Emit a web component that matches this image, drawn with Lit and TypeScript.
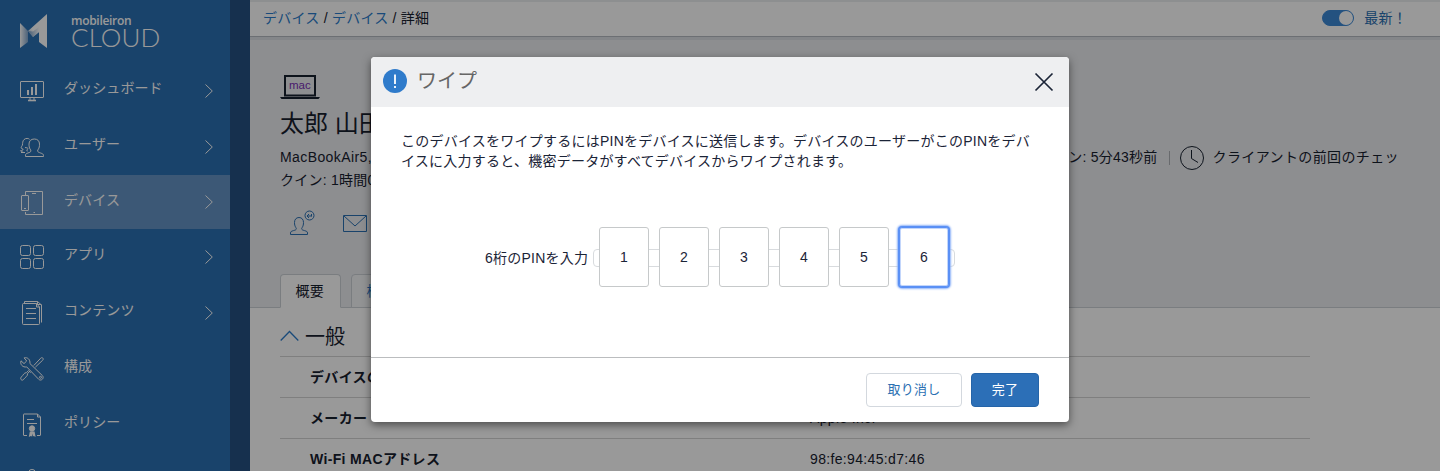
import { LitElement, html, css, svg } from "lit";
import { customElement, state } from "lit/decorators.js";
import { classMap } from "lit/directives/class-map.js";

const navIcons: Record<string, unknown> = {
  dashboard: svg`<rect x=".5" y="2.5" width="23" height="16" rx=".5"/><path d="M10 19v2M14 19v2" /><path d="M8 21.5h8" stroke-width="1.6"/><path d="M8 16v-5M12 16V8M16 16V5" stroke-width="2"/>`,
  users: svg`<path d="M5.5 21.5v-1.4c0-1.2 1-1.6 2.4-2.1 1.7-.6 2.8-.9 3-2 .1-.7-.3-1.2-.8-1.9-.8-1.2-1.1-2.8-1.1-5C9 6 11 4 14.3 4s5.2 2 5.2 5.1c0 2.200-.3 3.800-1.100 5-.5.7-.9 1.200-.8 1.900.2 1.100 1.300 1.400 3 2 1.800.6 2.900 1.100 2.900 2.600v.9z"/><path d="M9.500 4.300C8.600 3.200 5.800 2.900 4 4.600 2.500 6 2.700 8.300 2.400 10c-.2 1-1.400 1.700-1.200 2.900.2.900 1.200 1.200 2 1.300-.2.900-.9 1.400-2.700 1.500.5 1 1.500 1.300 2.700 1.300M5 12.500c.8.500 1.500 0 2.300.3.900.4.600 1.700-.5 2.100l.5 1.500M1 17.500h4"/>`,
  devices: svg`<path d="M5.500 4V.500h17v23h-17V21"/><rect x="1.500" y="4.500" width="7" height="15" rx=".5"/><path d="M12 2.500h4M13.500 21.500h1.500M4 17.500h2"/>`,
  apps: svg`<rect x=".5" y=".5" width="10" height="10" rx="2"/><rect x="13.500" y=".5" width="10" height="10" rx="2"/><rect x=".5" y="13.500" width="10" height="10" rx="2"/><rect x="13.500" y="13.500" width="10" height="10" rx="2"/>`,
  content: svg`<path d="M4.500 .5h13l4 3.500v17.500M4.500 .5v1.500M17.500 .5v3h4"/><path d="M3.500 2.500h13l3 3.500v16.500q0 1-1 1h-15q-1 0-1-1v-19q0-1 1-1zM16.500 2.500V6h3"/><path d="M6 7.500h10M6 12.500h10M6 17.500h10"/>`,
  config: svg`<path d="M1 3.800 4 6.600 6.700 4 4.100 .9C7.400-.1 10.500 2.500 9.900 6.500L22.300 18.500c2.500 2.500-1.200 6.200-3.700 3.700L6.700 9.900C2.500 10.700-.1 7.300 1 3.800z"/><circle cx="20.500" cy="20.300" r="1"/><path d="m13.800 8.500 6.900-7.300c1.500-1.500 3.500.5 2 2l-7.300 6.900M8.500 13.500l2.100 2.100M9.500 14.500l-2 2.200c.4 2.500-2.300 3.500-3.500 5.200-1.500 2.800-4.700.3-2.600-2 2-1.700 2.500-4.400 5-4.200l2-2"/>`,
  policy: svg`<path d="M7 22.500H4q-.5 0-.5-.5V1.500q0-.500.5-.500h13.500l3 3V22q0 .5-.5.500h-3M17.500 1v3h3M7 6.500h7M7 10.500h10"/><circle cx="12" cy="15.500" r="2.700" fill="currentColor"/><path d="m9.800 18.500-1 5.500 2-1 1 .5.500-3 .5 3 1-.500 1.800 1-1-5.500z" fill="currentColor" stroke="none"/>`,
  more: svg`<path d="M9 4V2.500Q9 .5 12 .5t3 2V4M3 23V6h18v17"/>`,
};

interface NavEntry { icon: string; label: string; arrow: boolean; active?: boolean }
const nav: NavEntry[] = [
  { icon: "dashboard", label: "ダッシュボード", arrow: true },
  { icon: "users", label: "ユーザー", arrow: true },
  { icon: "devices", label: "デバイス", arrow: true, active: true },
  { icon: "apps", label: "アプリ", arrow: true },
  { icon: "content", label: "コンテンツ", arrow: true },
  { icon: "config", label: "構成", arrow: false },
  { icon: "policy", label: "ポリシー", arrow: false },
  { icon: "more", label: "", arrow: false },
];

@customElement("side-nav")
class SideNav extends LitElement {
  static styles = css`
    :host { display: flex; flex: none; width: 250px; height: 471px; overflow: hidden; background: #255083; color: #fff; letter-spacing: .1px; }
    .panel { width: 230px; background: #2b70b2; }
    .brand { display: flex; height: 63px; padding: 14px 0 0 20px; box-sizing: border-box; }
    .mark { width: 27px; height: 34px; flex: none; }
    .words { margin: -1px 0 0 24px; font-family: Lato, sans-serif; white-space: nowrap; }
    .small { font: 600 12px/15px "Open Sans", sans-serif; letter-spacing: -.3px; }
    .large { font: 300 26px/19px Lato, sans-serif; letter-spacing: .1px; }
    .item { display: flex; height: 56px; box-sizing: border-box; padding-left: 20px; }
    .item.active { height: 54px; background: #6493c5; }
    .icon { width: 24px; height: 24px; margin-top: 16px; overflow: visible; flex: none; fill: none; stroke: currentColor; stroke-width: 1; }
    .label { flex: 1; margin: 15px 0 0 20px; line-height: 20px; height: 20px; white-space: nowrap; }
    .arrow { align-self: center; width: 8px; height: 14px; margin-right: 17px; fill: none; stroke: currentColor; }
  `;
  render() {
    return html`
      <div class="panel">
        <div class="brand">
          <svg class="mark" viewBox="0 0 27 34">
            <defs>
              <linearGradient id="a" x1="0" x2="1"><stop offset="0" stop-color="#fff"/><stop offset="1" stop-color="#7fa5cd"/></linearGradient>
              <linearGradient id="b" x1="0" x2="1" y1="1" y2="0"><stop offset="0" stop-color="#6b98c6"/><stop offset=".4" stop-color="#fff"/></linearGradient>
              <linearGradient id="c" x1="0" x2="1"><stop offset="0" stop-color="#5b8cc0"/><stop offset="1" stop-color="#fff"/></linearGradient>
            </defs>
            <path fill="url(#a)" d="M0 9 8 17v11l-8 6z"/>
            <path fill="url(#b)" d="M8 17 27 0v34l-8-6V18l-6 5z"/>
            <path fill="url(#c)" d="m8 17 5 .500 6-4.500v5l-6 5z" opacity=".8"/>
          </svg>
          <div class="words"><div class="small">mobileiron</div><div class="large">CLOUD</div></div>
        </div>
        ${nav.map((n) => html`
          <div class=${classMap({ item: true, active: !!n.active })}>
            <svg class="icon" viewBox="0 0 24 24">${navIcons[n.icon]}</svg>
            <span class="label">${n.label}</span>
            ${n.arrow ? html`<svg class="arrow" viewBox="0 0 8 14"><path d="M.500 .500 7.300 7 .500 13.500"/></svg>` : ""}
          </div>`)}
      </div>`;
  }
}

@customElement("device-page")
class DevicePage extends LitElement {
  static styles = css`
    :host { display: block; flex: 1; min-width: 0; height: 471px; overflow: hidden; background: #fff; white-space: nowrap; }
    .topbar { display: flex; align-items: center; height: 37px; box-sizing: border-box; border-top: 2px solid #eceef1; border-bottom: 1px solid #b4b9c0; padding: 0 33px 2px 13px; background: #fff; }
    .crumbs { flex: 1; line-height: 20px; }
    .link { color: #2b7ccb; }
    .switch { width: 30px; height: 14px; border: 1px solid #3d89d6; border-radius: 8px; background: #3d89d6; display: flex; justify-content: flex-end; }
    .knob { width: 14px; height: 14px; border-radius: 50%; background: #fff; }
    .latest { margin-left: 10px; color: #2b70b2; line-height: 20px; }
    .hero { height: 271px; box-sizing: border-box; border-top: 3px solid #dde0e5; border-bottom: 1px solid #ccd1d6; background: #ebedf1; padding: 35px 30px 0; display: flex; flex-direction: column; }
    .mac { width: 40px; height: 24px; }
    .mactext { font: 11.5px "Liberation Sans", sans-serif; letter-spacing: 0; fill: #7a2fb5; }
    .name { font-size: 24px; line-height: 34px; margin-top: 8px; letter-spacing: 0; }
    .meta { display: flex; align-items: center; line-height: 23px; height: 23px; margin-top: 5px; padding-right: 11px; }
    .meta + .meta { margin-top: 0; }
    .model { letter-spacing: .4px; }
    .checkin { margin-left: auto; }
    .bar { width: 1px; height: 14px; background: #aeb1b6; margin: 0 10px 0 11px; }
    .clock { width: 24px; height: 24px; fill: none; stroke: #17202e; margin-right: 9px; }
    .client { letter-spacing: .38px; }
    .actions { display: flex; align-items: flex-end; gap: 28px; margin-top: 19px; padding-left: 10px; height: 24px; }
    .act { fill: none; stroke: #2b70b2; width: 25px; height: 24px; overflow: visible; }
    .tabs { display: flex; gap: 10px; margin: auto 0 -1px; }
    .tab { height: 34px; box-sizing: border-box; border: 1px solid #ccd1d6; border-radius: 4px 4px 0 0; padding: 6px 14.5px 0; width: 61px; line-height: 20px; background: #f4f5f7; color: #2b7ccb; }
    .tab.on { background: #fff; border-bottom-color: #fff; color: inherit; }
    .section { display: flex; align-items: center; height: 48px; margin-left: 30px; padding-top: 9px; box-sizing: border-box; font-size: 20px; letter-spacing: 0; }
    .caret { width: 19px; height: 12px; margin: -2px 6px 0 0; fill: none; stroke: #2b7ccb; stroke-width: 1.300; }
    .rows { margin: 0 130px 0 30px; letter-spacing: .34px; }
    .row { display: grid; grid-template-columns: 500px 1fr; height: 41px; box-sizing: border-box; border-top: 1px solid #d4d4d4; padding-left: 30px; line-height: 40px; }
    .key { font-weight: 700; }
  `;
  render() {
    return html`
      <div class="topbar">
        <div class="crumbs"><span class="link">デバイス</span> / <span class="link">デバイス</span> / 詳細</div>
        <div class="switch"><div class="knob"></div></div>
        <div class="latest">最新！</div>
      </div>
      <div class="hero">
        <svg class="mac" viewBox="0 0 40 24"><path d="M5 1h30v19.500H5z" fill="none" stroke="#17202e" stroke-width="2"/><path d="M0 22h40l-1.500 2h-37z" fill="#17202e"/><text class="mactext" x="9" y="14">mac</text></svg>
        <div class="name">太郎 山田</div>
        <div class="meta"><span class="model">MacBookAir5,2</span><span class="checkin">ン: 5分43秒前</span><span class="bar"></span>
          <svg class="clock" viewBox="0 0 24 24"><circle cx="12" cy="12" r="11.500"/><path d="M11.500 4v8.500l6.500 4"/></svg><span class="client">クライアントの前回のチェッ</span></div>
        <div class="meta"><span>クイン: 1時間0分前</span></div>
        <div class="actions">
          <svg class="act" viewBox="0 0 25 24"><path d="M.5 23.500v-1.500c0-1.500 1-1.800 3-2.400 2-.6 2.800-.8 2.800-2 0-.8-1.800-2-1.800-6 0-3 1.600-5.100 4.500-5.100s4.500 2.100 4.500 5.100c0 4-1.800 5.200-1.800 6 0 1.200.8 1.400 2.800 2 2 .6 3 .9 3 2.400v1.500z"/><circle cx="19.500" cy="4.500" r="4.500"/><path d="M17 5h4.500M19 3 17 5l2 2M21.500 3v2.500"/></svg>
          <svg class="act" viewBox="0 0 25 24"><path d="M.5 4.500h23v16H.5zM1 5l11 10L23 5"/></svg>
        </div>
        <div class="tabs"><div class="tab on">概要</div><div class="tab">構成</div></div>
      </div>
      <div class="section"><svg class="caret" viewBox="0 0 19 12"><path d="M.7 10.500 9.500 1.500l8.800 9"/></svg>一般</div>
      <div class="rows">
        <div class="row"><span class="key">デバイスの種類</span><span></span></div>
        <div class="row"><span class="key">メーカー</span><span>Apple Inc.</span></div>
        <div class="row"><span class="key">Wi-Fi MACアドレス</span><span>98:fe:94:45:d7:46</span></div>
      </div>`;
  }
}

@customElement("wipe-dialog")
class WipeDialog extends LitElement {
  @state() pin = ["1", "2", "3", "4", "5", "6"];
  static styles = css`
    :host { display: flex; flex-direction: column; width: 698px; height: 365px; background: #fff; border-radius: 4px; box-shadow: 0 3px 9px rgba(0,0,0,.5); overflow: hidden; color: #1b2437; }
    .head { display: flex; align-items: center; height: 50px; flex: none; box-sizing: border-box; padding: 0 15px 2px 12px; background: #eeeff1; }
    .badge { width: 24px; height: 24px; flex: none; }
    .title { flex: 1; margin-left: 10px; font-size: 20px; line-height: 28px; color: #666; letter-spacing: 0; }
    .close { width: 20px; height: 20px; margin-top: 2px; fill: none; stroke: #1b2437; stroke-width: 1.700; }
    .copy { margin: 24px 30px 0; line-height: 20px; white-space: nowrap; }
    .pinrow { display: flex; align-items: center; height: 60px; margin: 56px 0 0 114px; }
    .pinlabel { width: 108px; line-height: 20px; margin-top: 2px; white-space: nowrap; }
    .group { display: flex; align-items: center; gap: 10px; width: 355px; height: 16px; margin-top: 2px; border: 1px solid #d8dbde; border-radius: 4px; padding-left: 5px; }
    .digit { width: 50px; height: 60px; flex: none; margin-top: -2px; box-sizing: border-box; border: 1px solid #c6c9ca; border-radius: 3px; background: #fff; display: flex; align-items: center; justify-content: center; line-height: 20px; }
    .digit.focus { border-color: #5a90f5; box-shadow: 0 0 0 1px #5a90f5, 0 0 2px 2px #8fb3f8, inset 0 0 0 1px #c3d6fb; }
    .foot { display: flex; justify-content: flex-end; gap: 9px; margin-top: auto; height: 65px; box-sizing: border-box; border-top: 1px solid #bbbdbf; padding: 15px 30px 0; }
    .btn { height: 34px; box-sizing: border-box; border: 1px solid #d3d8de; border-radius: 4px; width: 96px; text-align: center; font-size: 13px; line-height: 31px; color: #2b70b2; }
    .btn.primary { width: 68px; color: #fff; background: #2c6fb7; border-color: #2564a8; }
  `;
  render() {
    return html`
      <div class="head">
        <svg class="badge" viewBox="0 0 24 24"><circle cx="12" cy="12" r="12" fill="#2f7bcb"/><path d="M12 5.500v9.500M12 17v2" stroke="#fff" stroke-width="1.800"/></svg>
        <div class="title">ワイプ</div>
        <svg class="close" viewBox="0 0 20 20"><path d="m1.500 1.500 17 17M18.500 1.500l-17 17"/></svg>
      </div>
      <div class="copy">このデバイスをワイプするにはPINをデバイスに送信します。デバイスのユーザーがこのPINをデバ<br>イスに入力すると、機密データがすべてデバイスからワイプされます。</div>
      <div class="pinrow">
        <div class="pinlabel">6桁のPINを入力</div>
        <div class="group">${this.pin.map((d, i) => html`<div class=${classMap({ digit: true, focus: i === 5 })}>${d}</div>`)}</div>
      </div>
      <div class="foot"><div class="btn">取り消し</div><div class="btn primary">完了</div></div>`;
  }
}

@customElement("app-root")
class AppRoot extends LitElement {
  static styles = css`
    :host { display: block; position: relative; width: 1440px; height: 471px; overflow: hidden; font: 14px/20px "Liberation Sans", "Noto Sans CJK JP", sans-serif; letter-spacing: .24px; color: #17202e; }
    .shell { display: flex; height: 471px; }
    .shade { position: absolute; inset: 0; background: rgba(0,0,0,.4); display: flex; justify-content: center; align-items: flex-start; padding-top: 57px; }
  `;
  render() {
    return html`
      <div class="shell" lang="ja"><side-nav></side-nav><device-page></device-page></div>
      <div class="shade" lang="ja"><wipe-dialog></wipe-dialog></div>`;
  }
}
